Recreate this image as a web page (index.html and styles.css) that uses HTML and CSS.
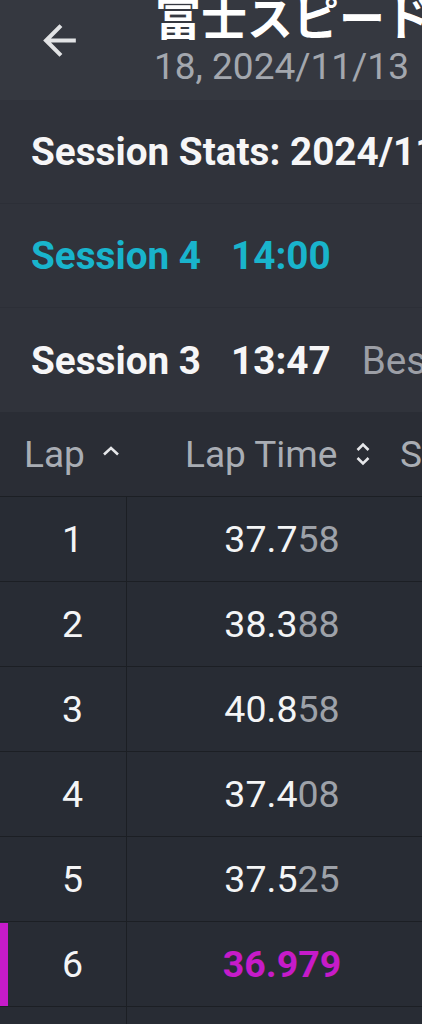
FILE: index.html
```html
<!DOCTYPE html>
<html lang="ja">
<head>
<meta charset="utf-8">
<link rel="stylesheet" href="styles.css">
</head>
<body>
<div class="app">
  <header class="appbar">
    <div class="back">
      <svg class="back-icon" viewBox="0 0 24 24" width="49" height="49"><path d="M20 11H7.83l5.59-5.59L12 4l-8 8 8 8 1.41-1.41L7.83 13H20v-2z" fill="#e2e3e5"/></svg>
    </div>
    <div class="titles">
      <div class="title">富士スピードウェイ</div>
      <div class="subtitle">18, 2024/11/13</div>
    </div>
  </header>

  <section class="sessions">
    <div class="srow"><span class="sname">Session Stats: 2024/11/13</span></div>
    <div class="srow active"><span class="sname">Session 4</span><span class="stime">14:00</span></div>
    <div class="srow"><span class="sname">Session 3</span><span class="stime">13:47</span><span class="sbest">Best 36.979</span></div>
  </section>

  <div class="thead">
    <div class="th th-lap">Lap
      <svg class="caret" viewBox="0 0 18 10" width="18" height="10"><path d="M2 8.5 9 2l7 6.5" fill="none" stroke="#e6e7ea" stroke-width="2.6"/></svg>
    </div>
    <div class="th th-time">Lap Time
      <svg class="sort" viewBox="0 0 16 26" width="16" height="26"><path d="M2.5 9 8 3.5 13.5 9M2.5 17 8 22.5 13.5 17" fill="none" stroke="#e6e7ea" stroke-width="2.6"/></svg>
    </div>
    <div class="th th-s">S</div>
  </div>

  <div class="tbody">
    <div class="tr"><div class="td lap">1</div><div class="td time">37.7<span class="dim">58</span></div></div>
    <div class="tr"><div class="td lap">2</div><div class="td time">38.3<span class="dim">88</span></div></div>
    <div class="tr"><div class="td lap">3</div><div class="td time">40.8<span class="dim">58</span></div></div>
    <div class="tr"><div class="td lap">4</div><div class="td time">37.4<span class="dim">08</span></div></div>
    <div class="tr"><div class="td lap">5</div><div class="td time">37.5<span class="dim">25</span></div></div>
    <div class="tr best"><div class="td lap">6</div><div class="td time">36.979</div></div>
    <div class="tr"><div class="td lap">7</div><div class="td time">37.1<span class="dim">12</span></div></div>
  </div>
</div>
</body>
</html>
```

FILE: styles.css
```css
html, body {
  margin: 0;
  padding: 0;
  background: #272b33;
  overflow: hidden;
}
body {
  width: 422px;
  height: 1024px;
  font-family: Roboto, "Noto Sans CJK JP", sans-serif;
  color: #f2f3f5;
}
.app {
  width: 422px;
  height: 1024px;
  overflow: hidden;
}
.appbar {
  height: 100px;
  background: #353840;
  display: flex;
  overflow: hidden;
}
.back {
  width: 155px;
  flex: none;
  display: flex;
  padding-left: 35px;
  padding-top: 16px;
  box-sizing: border-box;
}
.back-icon { display: block; }
.titles {
  flex: none;
  white-space: nowrap;
  display: flex;
  flex-direction: column;
}
.title {
  font-family: Roboto, "Noto Sans CJK JP", sans-serif;
  font-weight: 700;
  font-size: 46px;
  line-height: 46px;
  margin-top: -4px;
  color: #ffffff;
}
.subtitle {
  font-size: 37px;
  line-height: 40px;
  margin-top: 5px;
  margin-left: -1px;
  color: #a3a7ae;
}
.sessions {
  background: #30333b;
}
.srow {
  height: 103px;
  display: flex;
  align-items: center;
  padding-left: 31px;
  white-space: nowrap;
  overflow: hidden;
  border-bottom: 1px solid #2c2f37;
  font-size: 38.7px;
  font-weight: 700;
  color: #f6f6f7;
}
.srow:last-child { height: 104px; border-bottom: 0; }
.srow.active { color: #19b4cc; }
.stime { margin-left: 30px; }
.sbest { margin-left: 31px; font-weight: 400; color: #9c9fa6; }
.thead {
  height: 85px;
  background: #2a2d35;
  display: flex;
  align-items: center;
  white-space: nowrap;
  font-size: 37px;
  color: #a9adb4;
  border-bottom: 1px solid #1c1f24;
  box-sizing: border-box;
}
.th { display: flex; align-items: center; flex: none; }
.th-lap { margin-left: 24px; width: 161px; }
.caret { margin-left: 17px; margin-top: -6px; }
.th-time { width: 215px; }
.sort { margin-left: 18px; }
.tr {
  height: 85px;
  display: flex;
  border-bottom: 1px solid #1c1f24;
  box-sizing: border-box;
  position: relative;
  background: #282c34;
}
.td {
  display: flex;
  align-items: center;
  justify-content: center;
  font-size: 37.5px;
  color: #f4f5f6;
}
.lap {
  width: 127px;
  flex: none;
  padding-left: 19px;
  box-sizing: border-box;
  border-right: 1px solid #1c1f24;
}
.time {
  width: 310px;
  flex: none;
}
.dim { color: #9ea2a9; }
.best .time { color: #c61bc9; font-weight: 700; }
.best::before {
  content: "";
  position: absolute;
  left: 0;
  top: 1px;
  bottom: 0;
  width: 8px;
  background: #c61bc9;
}
```
